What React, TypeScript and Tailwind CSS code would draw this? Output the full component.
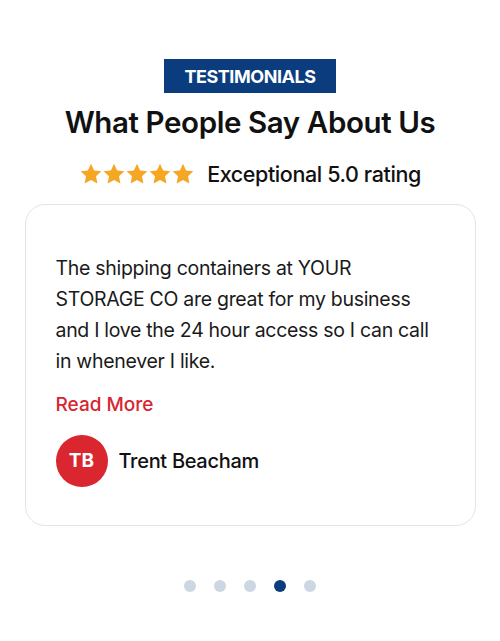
import React from 'react';

const Star: React.FC = () => (
  <svg viewBox="0 0 24 24" className="w-[24px] h-[24px] -mx-[0.5px]" fill="#f5a623">
    <path d="M12 1.8l3.1 6.6 7.2.9-5.3 5 1.4 7.1L12 17.9l-6.4 3.5 1.4-7.1-5.3-5 7.2-.9z" />
  </svg>
);

const App: React.FC = () => {
  const dots = [0, 1, 2, 3, 4];
  const active = 3;

  return (
    <div className="w-[500px] h-[641px] bg-white flex flex-col items-center pt-[59px] font-['Inter',sans-serif] text-[#111]">
      <div className="bg-[#0b3d7e] text-white px-[20px] h-[34px] flex items-center text-[18px] font-bold tracking-tight">
        TESTIMONIALS
      </div>
      <h2 className="mt-[9px] text-[29.5px] font-semibold tracking-[-0.4px] leading-[40px]">
        What People Say About Us
      </h2>
      <div className="mt-[16px] flex items-center gap-[13px]">
        <div className="flex">
          {dots.map((i) => (
            <Star key={i} />
          ))}
        </div>
        <span className="text-[21.5px] font-medium tracking-[-0.4px]">Exceptional 5.0 rating</span>
      </div>

      <div className="mt-[14px] w-[451px] h-[322px] border border-[#e4e4e4] rounded-[20px] px-[30px] pt-[48px]">
        <p className="text-[19.5px] leading-[31px] tracking-[-0.3px] text-[#1a1a1a]">
          The shipping containers at YOUR STORAGE CO are great for my business and I love the 24 hour access so I can call in whenever I like.
        </p>
        <a className="block mt-[14px] text-[19px] font-medium text-[#d62631]">Read More</a>
        <div className="mt-[15px] flex items-center gap-[11px]">
          <div className="w-[52px] h-[52px] rounded-full bg-[#d9262f] text-white flex items-center justify-center text-[19px] font-bold">
            TB
          </div>
          <span className="text-[20px] font-medium tracking-[-0.3px]">Trent Beacham</span>
        </div>
      </div>

      <div className="mt-[54px] flex gap-[18px]">
        {dots.map((i) => (
          <span
            key={i}
            className={i === active ? 'w-[12px] h-[12px] rounded-full bg-[#0b3d7e]' : 'w-[12px] h-[12px] rounded-full bg-[#cdd6e3]'}
          />
        ))}
      </div>
    </div>
  );
};

export default App;
